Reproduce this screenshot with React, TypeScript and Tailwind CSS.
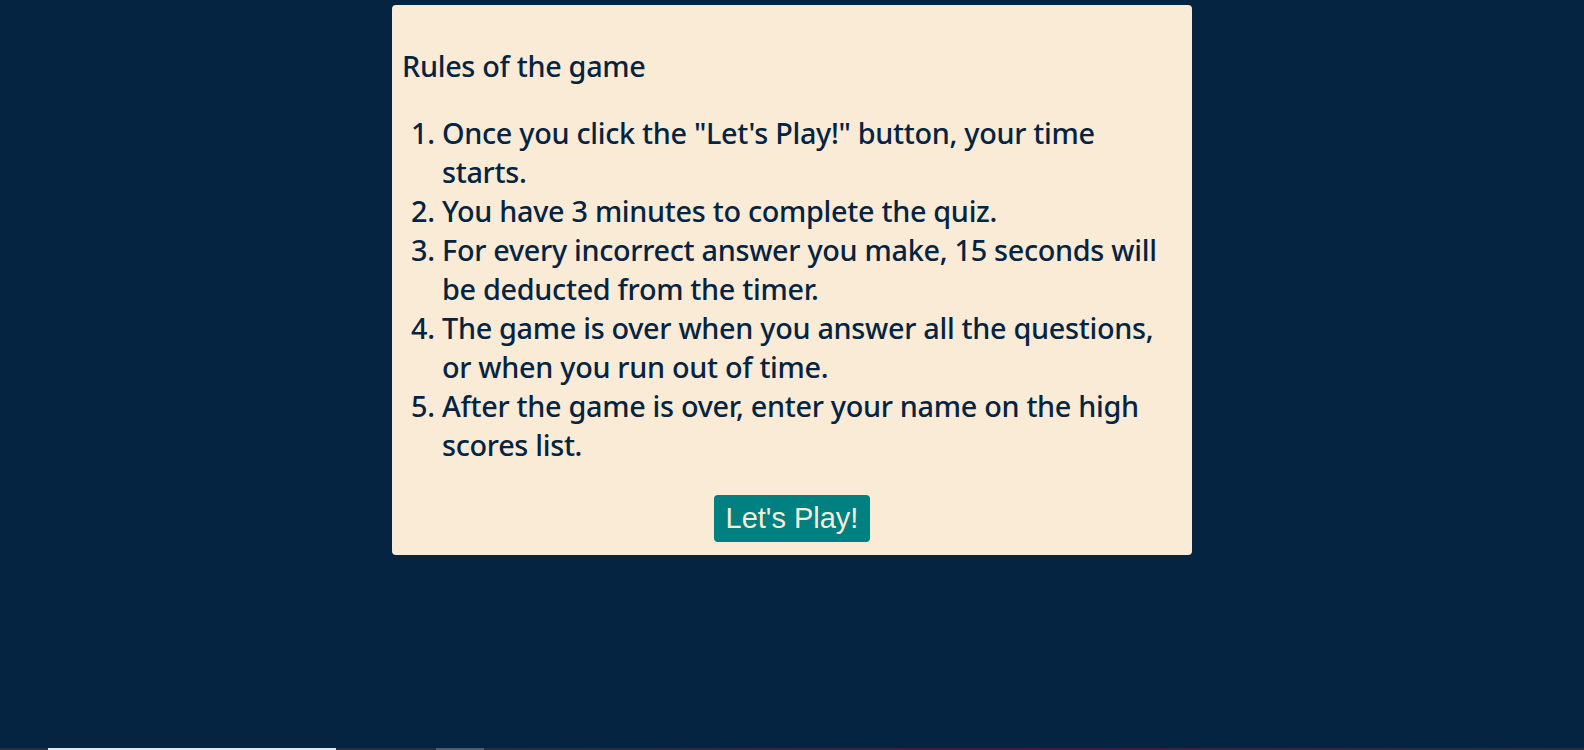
import React from "react";

const rules: string[] = [
  'Once you click the "Let\'s Play!" button, your time starts.',
  "You have 3 minutes to complete the quiz.",
  "For every incorrect answer you make, 15 seconds will be deducted from the timer.",
  "The game is over when you answer all the questions, or when you run out of time.",
  "After the game is over, enter your name on the high scores list.",
];

const App: React.FC = () => {
  return (
    <div className="flex h-[750px] flex-col bg-[#052441] font-['Noto_Sans','Open_Sans',sans-serif] font-medium text-[#052441]">
      {/* Rules card */}
      <main className="flex-1 pt-[5px]">
        <div className="mx-auto w-[800px] rounded-[4px] bg-[#faebd7] px-[10px] pt-[10px] pb-[13px]">
          <p className="mt-[32px] mb-[29px] text-[28.8px] leading-[38.3px] tracking-[-0.3px]">Rules of the game</p>
          <ol className="mb-[31px] list-decimal pl-[40px] text-[28.8px] leading-[38.9px] tracking-[-0.3px]">
            {rules.map((rule, index) => (
              <li key={index}>{rule}</li>
            ))}
          </ol>
          <button
            type="button"
            className="mx-auto block rounded-[4px] bg-[#008080] px-[12px] py-[7px] font-['Liberation_Sans',Arial,sans-serif] text-[29px] font-normal leading-[33px] text-[#faebd7]"
          >
            Let's Play!
          </button>
        </div>
      </main>

      {/* bottom edge strip */}
      <div className="flex h-[2px] bg-[#2a2d3a]">
        <div className="w-[48px]" />
        <div className="w-[288px] bg-[#e6e6e6]" />
        <div className="w-[100px]" />
        <div className="w-[48px] bg-[#565b68]" />
        <div className="flex-1 bg-gradient-to-r from-[#2a2d3a] via-[#3a1f3f] to-[#2a2d3a]" />
      </div>
    </div>
  );
};

export default App;
